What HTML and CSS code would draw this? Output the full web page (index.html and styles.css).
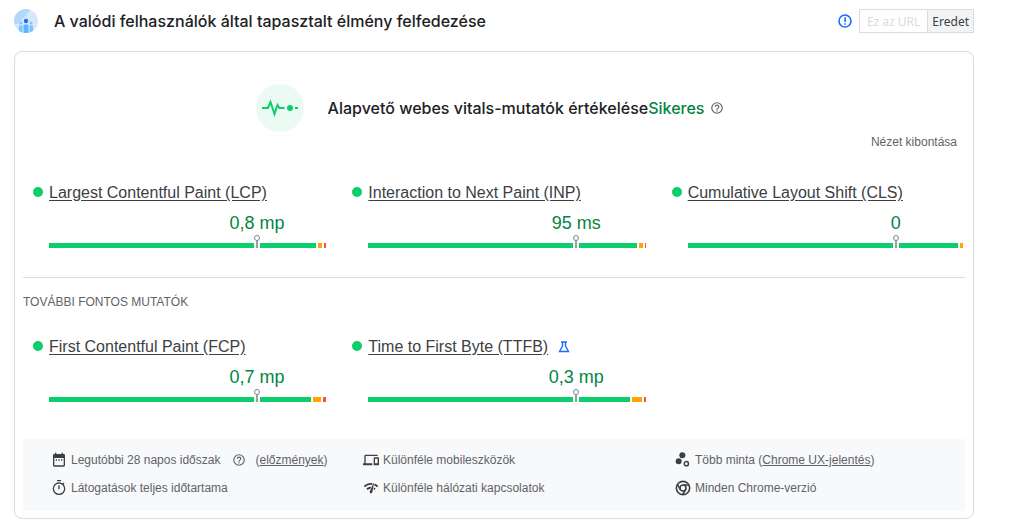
FILE: index.html
```html
<!DOCTYPE html>
<html lang="hu">
<head>
    <meta charset="UTF-8">
    <meta name="viewport" content="width=device-width, initial-scale=1">
    <title>A valódi felhasználók által tapasztalt élmény felfedezése</title>
    <link rel="stylesheet" href="styles.css">
</head>
<body>
    <div class="container">
        <header class="header">
            <svg class="header-icon" viewBox="0 0 24 24" aria-hidden="true">
                <clipPath id="round"><circle cx="12" cy="12" r="12"/></clipPath>
                <g clip-path="url(#round)">
                    <rect width="24" height="24" fill="#d7e8fc"/>
                    <path d="M0 0h17L4 15H0z" fill="#b5d6fb"/>
                    <path d="M5 16.500h3.500V24H5zM15.500 16.500H19V24h-3.500z" fill="#7cc4fb"/>
                    <path d="M9.500 16.500a1 1 0 0 1 1-1h3a1 1 0 0 1 1 1V24h-5z" fill="#5bb8fb"/>
                    <circle cx="7" cy="14" r="1.500" fill="#7cc4fb"/>
                    <circle cx="17" cy="14" r="1.500" fill="#7cc4fb"/>
                    <circle cx="12" cy="12" r="2.200" fill="#1a6dff"/>
                </g>
            </svg>
            <h1>A valódi felhasználók által tapasztalt élmény felfedezése</h1>
            <svg class="info-icon" viewBox="0 0 24 24" aria-hidden="true">
                <circle cx="12" cy="12" r="9" fill="none" stroke="currentColor" stroke-width="2.400"/>
                <path d="M11 6.500h2.400v7H11zM11 15.200h2.400v2.400H11z" fill="currentColor"/>
            </svg>
            <div class="switch">
                <button type="button" disabled>Ez az URL</button>
                <button type="button" class="active">Eredet</button>
            </div>
        </header>

        <main class="card">
            <div class="summary">
                <svg class="pulse" viewBox="0 0 48 48" aria-hidden="true">
                    <circle cx="24" cy="24" r="24" fill="#ebfaf3"/>
                    <path d="M6 24h6l2.500-6 4 12 3-9 2 3h5" fill="none" stroke="#0cce6b" stroke-width="2"/>
                    <circle cx="34" cy="24" r="3" fill="#0cce6b"/>
                    <path d="M39 24h3" stroke="#0cce6b" stroke-width="2"/>
                </svg>
                <h2>Alapvető webes vitals-mutatók értékelése<span class="pass">Sikeres</span></h2>
                <svg class="help-icon" viewBox="0 0 24 24" aria-hidden="true"><use href="#help"/></svg>
            </div>
            <div class="expand"><button type="button">Nézet kibontása</button></div>

            <section class="metrics">
                <div class="metric">
                    <h3><a href="#lcp">Largest Contentful Paint (LCP)</a></h3>
                    <div class="value">0,8 mp</div>
                    <div class="bar">
                        <span class="good" style="flex-grow: 267"></span>
                        <span class="average" style="flex-grow: 4"></span>
                        <span class="poor" style="flex-grow: 2"></span>
                        <span class="pin"></span>
                    </div>
                </div>
                <div class="metric">
                    <h3><a href="#inp">Interaction to Next Paint (INP)</a></h3>
                    <div class="value">95 ms</div>
                    <div class="bar">
                        <span class="good" style="flex-grow: 269"></span>
                        <span class="average" style="flex-grow: 4"></span>
                        <span class="poor" style="flex-grow: 1"></span>
                        <span class="pin"></span>
                    </div>
                </div>
                <div class="metric">
                    <h3><a href="#cls">Cumulative Layout Shift (CLS)</a></h3>
                    <div class="value">0</div>
                    <div class="bar">
                        <span class="good" style="flex-grow: 270"></span>
                        <span class="average" style="flex-grow: 3"></span>
                        <span class="poor" style="flex-grow: 0"></span>
                        <span class="pin"></span>
                    </div>
                </div>
            </section>

            <h4>TOVÁBBI FONTOS MUTATÓK</h4>

            <section class="metrics other">
                <div class="metric">
                    <h3><a href="#fcp">First Contentful Paint (FCP)</a></h3>
                    <div class="value">0,7 mp</div>
                    <div class="bar">
                        <span class="good" style="flex-grow: 262"></span>
                        <span class="average" style="flex-grow: 8"></span>
                        <span class="poor" style="flex-grow: 3"></span>
                        <span class="pin"></span>
                    </div>
                </div>
                <div class="metric">
                    <h3>
                        <a href="#ttfb">Time to First Byte (TTFB)</a>
                        <svg class="flask" viewBox="0 0 12 12" aria-hidden="true">
                            <path d="M3 1h6M4.500 1v4L1.500 10.500h9L7.500 5V1" fill="none" stroke="currentColor" stroke-width="1.400"/>
                        </svg>
                    </h3>
                    <div class="value">0,3 mp</div>
                    <div class="bar">
                        <span class="good" style="flex-grow: 262"></span>
                        <span class="average" style="flex-grow: 10"></span>
                        <span class="poor" style="flex-grow: 2"></span>
                        <span class="pin"></span>
                    </div>
                </div>
            </section>

            <ul class="details">
                <li>
                    <svg viewBox="0 0 24 24" aria-hidden="true"><path d="M19 3h-1V1h-2v2H8V1H6v2H5a2 2 0 0 0-2 2v15c0 1.100.9 2 2 2h14a2 2 0 0 0 2-2V5a2 2 0 0 0-2-2zm0 17H5V9h14zM7 11h2v2H7zm4 0h2v2h-2zm4 0h2v2h-2z"/></svg>
                    <span>Legutóbbi 28 napos időszak</span>
                    <svg class="help-icon" viewBox="0 0 24 24" aria-hidden="true"><use href="#help"/></svg>
                    <span>(<a href="#history">előzmények</a>)</span>
                </li>
                <li>
                    <svg viewBox="0 0 24 24" aria-hidden="true"><path d="M4 6h18V4H4a2 2 0 0 0-2 2v11H0v3h14v-3H4zm19 2h-6a1 1 0 0 0-1 1v10c0 .55.45 1 1 1h6c.55 0 1-.45 1-1V9a1 1 0 0 0-1-1zm-1 9h-4v-7h4z"/></svg>
                    <span>Különféle mobileszközök</span>
                </li>
                <li>
                    <svg viewBox="0 0 24 24" aria-hidden="true"><circle cx="5.500" cy="14" r="4.500"/><circle cx="11" cy="5" r="4.500"/><circle cx="17" cy="17.500" r="3.200" fill="none" stroke="currentColor" stroke-width="2.200"/></svg>
                    <span>Több minta (<a href="#crux">Chrome UX-jelentés</a>)</span>
                </li>
                <li>
                    <svg viewBox="0 0 24 24" aria-hidden="true"><path d="M9 0h6v2H9zM11 8h2v6h-2z"/><path d="M17.500 6.500l2-2" stroke="currentColor" stroke-width="2"/><circle cx="12" cy="13" r="8.500" fill="none" stroke="currentColor" stroke-width="2"/></svg>
                    <span>Látogatások teljes időtartama</span>
                </li>
                <li>
                    <svg viewBox="0 0 24 24" aria-hidden="true"><path d="M15.900 5c-.17 0-.32.09-.41.23l-.07.15-5.180 11.650c-.16.29-.26.61-.26.960 0 1.110.9 2.010 2.010 2.010.960 0 1.770-.68 1.960-1.590l.01-.03L16.400 5.500c0-.28-.22-.5-.5-.5zM1 9l2 2c2.880-2.880 6.790-4.080 10.530-3.620l1.190-2.680C9.890 3.840 4.740 5.270 1 9zm20 2l2-2c-1.640-1.640-3.550-2.820-5.590-3.570l-.53 2.820c1.500.62 2.900 1.530 4.120 2.750zm-4 4l2-2c-.8-.8-1.700-1.420-2.660-1.890l-.55 2.920c.42.27.83.59 1.210.970zM5 13l2 2c1.130-1.130 2.560-1.790 4.030-2l1.280-2.880c-2.630-.08-5.300.870-7.310 2.880z"/></svg>
                    <span>Különféle hálózati kapcsolatok</span>
                </li>
                <li>
                    <svg viewBox="0 0 24 24" aria-hidden="true"><g fill="none" stroke="currentColor" stroke-width="2.400"><circle cx="12" cy="12" r="10"/><circle cx="12" cy="12" r="4.500"/><path d="M12 7.500h9M8.100 14.300L3.600 6.500M15.900 14.300L11.400 22"/></g></svg>
                    <span>Minden Chrome-verzió</span>
                </li>
            </ul>
        </main>
    </div>

    <!-- shared question mark icon -->
    <svg class="symbols" aria-hidden="true">
        <symbol id="help" viewBox="0 0 24 24">
            <path d="M11 18h2v-2h-2zm1-16a10 10 0 1 0 0 20 10 10 0 0 0 0-20zm0 18a8 8 0 1 1 0-16 8 8 0 0 1 0 16zm0-14a4 4 0 0 0-4 4h2a2 2 0 1 1 4 0c0 2-3 1.750-3 5h2c0-2.250 3-2.500 3-5a4 4 0 0 0-4-4z"/>
        </symbol>
    </svg>
</body>
</html>
```
FILE: styles.css
```css
body {
    margin: 0;
    background-color: #ffffff;
    color: #5f6368;
    font-family: "Liberation Sans", Arial, sans-serif;
    font-size: 12px;
    line-height: 16px;
}
svg {
    flex: none;
    fill: currentColor;
}
a {
    color: inherit;
}
h1, h2, h3, h4 {
    margin: 0;
    font-weight: normal;
}
h1, h2 {
    color: #202124;
    font-family: "Google Sans", Inter, sans-serif;
    font-size: 16px;
    font-weight: 500;
    line-height: 24px;
}
.container {
    padding: 9px 47px 12px 14px;
}

/* Header */
.header {
    display: flex;
    align-items: center;
    margin-bottom: 18px;
}
.header-icon {
    width: 24px;
    height: 24px;
    margin-right: 16px;
}
.info-icon {
    width: 16px;
    height: 16px;
    margin-left: auto;
    margin-right: 6px;
    color: #1a6dff;
}
.switch {
    display: flex;
}
.switch button {
    height: 24px;
    padding: 0 4px;
    border: 1px solid #dadce0;
    background-color: #ffffff;
    color: #3c4043;
    font-family: "Noto Sans", sans-serif;
    font-size: 12px;
}
.switch button:disabled {
    padding: 0 7px;
    border-right: 0;
    color: #dadce0;
}
.switch .active {
    background-color: #f1f3f4;
}

/* Card */
.card {
    padding: 32px 8px 7px;
    border: 1px solid #dadce0;
    border-radius: 8px;
}
.summary {
    display: flex;
    align-items: center;
    justify-content: center;
    padding-right: 8px;
}
.pulse {
    width: 48px;
    height: 48px;
    margin-right: 24px;
}
.pass {
    color: #018642;
}
.help-icon {
    width: 14px;
    height: 14px;
    margin-left: 6px;
}
.expand {
    display: flex;
    justify-content: flex-end;
    padding: 2px 8px 0;
}
.expand button {
    padding: 0;
    border: 0;
    background: none;
    color: inherit;
    font: inherit;
}

/* Metrics */
.metrics {
    display: grid;
    grid-template-columns: repeat(3, 1fr);
    gap: 42px;
    padding: 33px 0 29px 26px;
}
.other {
    padding-top: 27px;
}
.metric h3 {
    display: flex;
    align-items: center;
    color: #3c4043;
    font-size: 16px;
    line-height: 20px;
}
.metric h3::before {
    content: "";
    width: 10px;
    height: 10px;
    margin: 0 6px 2px -16px;
    border-radius: 50%;
    background-color: #0cce6b;
}
.metric a {
    text-underline-offset: 2px;
}
.flask {
    width: 12px;
    height: 12px;
    margin-left: 10px;
    color: #1a6dff;
}
.value {
    margin: 9px 0 9px 50%;
    color: #018642;
    font-size: 18px;
    line-height: 22px;
    text-align: center;
}
.bar {
    position: relative;
    display: flex;
    gap: 2px;
    height: 5px;
}
.good {
    background-color: #0cce6b;
}
.average {
    background-color: #ffa400;
}
.poor {
    background-color: #ff4e42;
}
.pin {
    position: absolute;
    bottom: 0;
    left: 75%;
    width: 2px;
    height: 8px;
    margin-left: -3px;
    border: solid #ffffff;
    border-width: 0 2px;
    background-color: #9aa0a6;
}
.pin::before {
    content: "";
    position: absolute;
    bottom: 7px;
    left: -2px;
    width: 4px;
    height: 4px;
    border: 1px solid #80868b;
    border-radius: 50%;
    background-color: #ffffff;
}
h4 {
    padding: 16px 0 0;
    border-top: 1px solid #dadce0;
    font-size: 12px;
    line-height: 16px;
}

/* Details */
.details {
    display: grid;
    grid-template-columns: repeat(3, 1fr);
    gap: 12px 30px;
    margin: 8px 0 0;
    padding: 13px 8px 15px 28px;
    background-color: #f8f9fa;
    list-style: none;
}
.details li {
    display: flex;
    align-items: center;
    white-space: nowrap;
}
.details li > svg:first-child {
    width: 16px;
    height: 16px;
    margin-right: 4px;
    color: #3c4043;
}
.details .help-icon {
    margin: 0 9px 0 12px;
}
.symbols {
    display: none;
}
```
